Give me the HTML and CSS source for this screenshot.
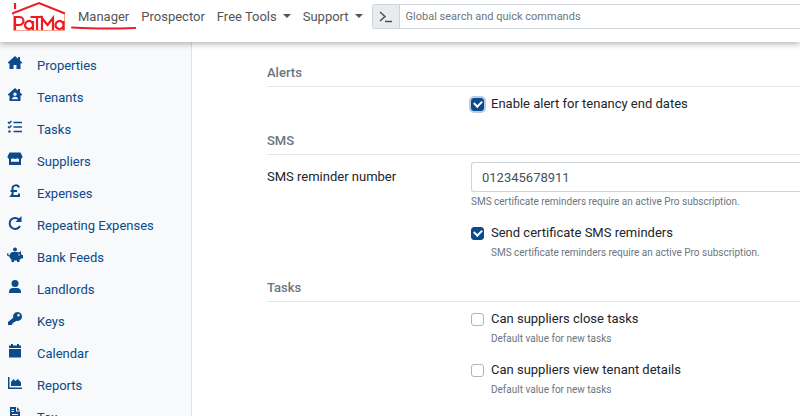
FILE: index.html
```html
<!DOCTYPE html>
<html lang="en">
<head>
<meta charset="utf-8">
<meta name="viewport" content="width=device-width, initial-scale=1">
<title>PaTMa Manager settings</title>
<link rel="stylesheet" href="styles.css">
</head>
<body>
<header class="topbar">
  <a class="logo" href="#" aria-label="PaTMa">
    <svg viewBox="0 0 54 32" width="54" height="32" fill="none" stroke="#ed1c24">
      <path stroke-width="2" d="M0 13.500 27 3l26 10.500"/>
      <path stroke-width="2.200" d="M3 3v6"/>
      <path stroke="#f7a58c" stroke-width="1" d="M1.500 14v16.500h51V14"/>
      <path stroke-width="2.200" d="M3 30V17h4.500a3.500 3.500 0 0 1 0 8H3M21 21v9M21 25.500a4 4 0 1 0-.1.500M18.500 17H31M25 17v13M30 30V18l5.500 7L41 18v12M51.500 21v9M51.500 25.500a4 4 0 1 0-.1.500"/>
    </svg>
  </a>
  <nav class="mainnav">
    <a class="current" href="#">Manager
      <svg class="underline" viewBox="0 0 64 4" height="4" preserveAspectRatio="none"><path d="M1 1.500Q20 2.500 34 2.500T63 2" fill="none" stroke="#ed1c2e" stroke-width="2" stroke-linecap="round"/></svg>
    </a>
    <a href="#">Prospector</a>
    <a class="caret" href="#">Free Tools</a>
    <a class="caret" href="#">Support</a>
  </nav>
  <form class="search">
    <label for="q" aria-label="Search"><svg viewBox="0 0 16 12" width="16" height="12" fill="none" stroke="#495057" stroke-width="1.500"><path d="m2 1 5 4.500L2 10M7 10.500h7"/></svg></label>
    <input id="q" type="text" placeholder="Global search and quick commands">
  </form>
</header>
<div class="page">
  <aside class="sidebar">
    <a href="#"><svg viewBox="0 0 16 16"><path d="M8 1 .8 7.500l1 1.200.7-.5V14h4v-4h3v4h4V8.200l.7.500 1-1.200L13 5.400V2h-2v1.700z"/></svg>Properties</a>
    <a href="#"><svg viewBox="0 0 16 16"><path fill-rule="evenodd" d="M8 1 .8 7.500l1 1.200.7-.5V14h11V8.200l.7.500 1-1.200L13 5.400V2h-2v1.700zM8 5.500a1.700 1.700 0 1 1 0 3.400 1.700 1.700 0 0 1 0-3.400M5 12.300c0-1.600 1-2.500 3-2.500s3 .9 3 2.500z"/></svg>Tenants</a>
    <a href="#"><svg viewBox="0 0 16 16"><path fill="none" stroke="currentColor" stroke-width="1.500" d="M6.500 3.500H15M6.500 8H15M6.500 12.500H15M1 3l1.200 1.200L4.500 2M1 7.500l1.200 1.200 2.300-2.200"/><circle cx="2.500" cy="12.500" r="1.200"/></svg>Tasks</a>
    <a href="#"><svg viewBox="0 0 16 16"><path fill-rule="evenodd" d="M2.500 1.500h11l2 4c0 1.200-.6 2-1.500 2.200V14H2V7.700C1.100 7.500.5 6.700.5 5.500zM4 8v2.700h8V8c-.8 0-1.400-.2-2-.7-1.200.9-2.800.9-4 0-.6.500-1.200.7-2 .7"/></svg>Suppliers</a>
    <a href="#"><svg viewBox="0 0 16 16"><path fill="none" stroke="currentColor" stroke-width="2" d="M12 4.500C11 1.500 5.500 1.500 5.500 5.500c0 3 1.500 5-1 7.500H12v-2.500M3.500 8H10"/></svg>Expenses</a>
    <a href="#"><svg viewBox="0 0 16 16"><path fill="none" stroke="currentColor" stroke-width="2" d="M12.500 5A5.500 5.500 0 1 0 13 11"/><path d="M14.500 1v6h-6z"/></svg>Repeating Expenses</a>
    <a href="#"><svg viewBox="0 0 16 16"><circle cx="8" cy="2.500" r="2"/><path fill-rule="evenodd" d="M6 5h4c1 0 1.500.2 2 .5L14 4v2.800l.8 1.200H16v3.500h-2L12.500 13v2H10v-1.500H7V15H4.500v-2.500C3 11.500 2.500 10.500 2.500 9.500 1 9.500 0 8.800 0 7.500 0 6.500.8 6 1.300 6l.2 1c-.6.500-.2 1.200 1.100 1.200C3 6.500 4 5 6 5m5.500 2.200v1.200h1.200V7.200z"/></svg>Bank Feeds</a>
    <a href="#"><svg viewBox="0 0 16 16"><circle cx="8" cy="4.500" r="3.500"/><path d="M2 14v-1c0-2.500 1.700-4 4-4h4c2.300 0 4 1.500 4 4v1z"/></svg>Landlords</a>
    <a href="#"><svg viewBox="0 0 16 16"><path fill-rule="evenodd" d="M10.500 1a4.500 4.500 0 1 1-1.300 8.800L8 11H6.500v1.500H5V14H1v-3l5.200-4.300A4.500 4.500 0 0 1 10.500 1m1 2a1.300 1.300 0 1 0 0 2.600 1.300 1.300 0 0 0 0-2.600"/></svg>Keys</a>
    <a href="#"><svg viewBox="0 0 16 16"><path d="M4 1h2v1.500h4V1h2v1.500h2V5H2V2.500h2zM2 6h12v8.500H2z"/></svg>Calendar</a>
    <a href="#"><svg viewBox="0 0 16 16"><path d="M1 2h1.500v10.500H15V14H1zM4 11V7l2.500-3 2 2L11 4l3 3.500V11z"/></svg>Reports</a>
    <a href="#"><svg viewBox="0 0 16 16"><path fill-rule="evenodd" d="M3 0h6v4.500h4V16H3zm7 0 3 3.500h-3zM4.500 2v1H7V2zm0 2v1H7V4zm.5 3v1h6V7zm0 2.500v1h6v-1z"/></svg>Tax</a>
  </aside>
  <main class="settings">
    <section>
      <h2>Alerts</h2>
      <div class="fields">
        <div class="check"><input id="alert" class="focused" type="checkbox" checked><label for="alert">Enable alert for tenancy end dates</label></div>
      </div>
    </section>
    <section>
      <h2>SMS</h2>
      <div class="row">
        <label for="number">SMS reminder number</label>
        <div>
          <input id="number" class="textbox" type="text" value="012345678911">
          <p class="help">SMS certificate reminders require an active Pro subscription.</p>
        </div>
      </div>
      <div class="fields">
        <div class="check"><input id="sms" type="checkbox" checked><label for="sms">Send certificate SMS reminders</label><p class="help">SMS certificate reminders require an active Pro subscription.</p></div>
      </div>
    </section>
    <section>
      <h2>Tasks</h2>
      <div class="fields">
        <div class="check"><input id="close" type="checkbox"><label for="close">Can suppliers close tasks</label><p class="help">Default value for new tasks</p></div>
        <div class="check"><input id="view" type="checkbox"><label for="view">Can suppliers view tenant details</label><p class="help">Default value for new tasks</p></div>
      </div>
    </section>
  </main>
</div>
</body>
</html>
```
FILE: styles.css
```css
* { box-sizing: border-box; }
body {
  margin: 0;
  height: 100vh;
  overflow: hidden;
  display: flex;
  flex-direction: column;
  font: 13px/20px Roboto, "Liberation Sans", sans-serif;
  color: #212529;
  background: #fff;
}
a { color: inherit; text-decoration: none; }
h2, p { margin: 0; }

.topbar {
  position: relative;
  z-index: 1;
  flex: none;
  display: flex;
  align-items: flex-start;
  height: 42px;
  padding-left: 12px;
  background: #fff;
  box-shadow: 0 2px 6px rgba(0, 0, 0, .3);
}
.logo { width: 54px; height: 32px; }
.logo svg { display: block; }
.mainnav {
  display: flex;
  gap: 12px;
  padding: 7px 9px 0 12px;
  color: #555;
  white-space: nowrap;
}
.current { position: relative; }
.underline { position: absolute; left: -7px; top: 19px; width: calc(100% + 14px); }
.caret::after {
  content: "";
  display: inline-block;
  margin-left: 6px;
  vertical-align: 3px;
  border: 4px solid transparent;
  border-top-color: currentColor;
  border-bottom: 0;
}
.search {
  flex: 1;
  display: flex;
  height: 25px;
  margin-top: 4px;
  border: 1px solid #ced4da;
  border-right: 0;
  border-radius: 3px 0 0 3px;
}
.search label {
  display: flex;
  align-items: center;
  justify-content: center;
  width: 27px;
  background: #e9ecef;
  border-right: 1px solid #ced4da;
}
.search input {
  flex: 1;
  min-width: 0;
  border: 0;
  padding: 0 6px;
  font: 11px Roboto, sans-serif;
  background: none;
}
.search input::placeholder { color: #6c757d; opacity: 1; }

.page { flex: 1; min-height: 0; display: flex; }
.sidebar {
  flex: none;
  width: 192px;
  padding: 8px 0 0 7px;
  background: #f8f9fa;
  border-right: 1px solid #dee2e6;
  color: #0b4a8b;
}
.sidebar a { display: flex; align-items: center; height: 32px; }
.sidebar svg {
  width: 16px;
  height: 16px;
  margin: 0 14px 6px 0;
  fill: currentColor;
}

.settings { flex: 1; min-width: 0; padding: 21px 0 0 75px; }
h2 {
  padding-bottom: 3px;
  margin-bottom: 7px;
  border-bottom: 1px solid #e5e7e9;
  font-size: 13px;
  line-height: 20px;
  font-weight: 500;
  color: #6c757d;
}
section { margin-bottom: 17px; }
.row { display: grid; grid-template-columns: 204px 1fr; margin-bottom: 13px; }
.row > label { padding-top: 5px; }
.fields { padding-left: 204px; }
.check { display: grid; grid-template-columns: 20px 1fr; align-items: center; margin-bottom: 13px; }
.check .help { grid-column: 2; }
.check input {
  appearance: none;
  width: 13px;
  height: 13px;
  margin: 0;
  border: 1px solid #adb5bd;
  border-radius: 3px;
}
.check input:checked {
  border-color: #0b4a8b;
  background: #0b4a8b;
  display: grid;
  place-items: center;
}
.check input:checked::before {
  content: "";
  width: 6px;
  height: 4px;
  margin-bottom: 2px;
  border: solid #fff;
  border-width: 0 0 2px 2px;
  transform: rotate(-45deg);
}
.check .focused { box-shadow: 0 0 0 2px #b9cde2; }
.textbox {
  display: block;
  width: 100%;
  height: 30px;
  padding: 0 10px;
  border: 1px solid #ced4da;
  border-right: 0;
  border-radius: 3px 0 0 3px;
  font: 13px Roboto, sans-serif;
  color: #495057;
}
.help { margin-top: 2px; font-size: 10px; line-height: 16px; color: #6c757d; }
```
